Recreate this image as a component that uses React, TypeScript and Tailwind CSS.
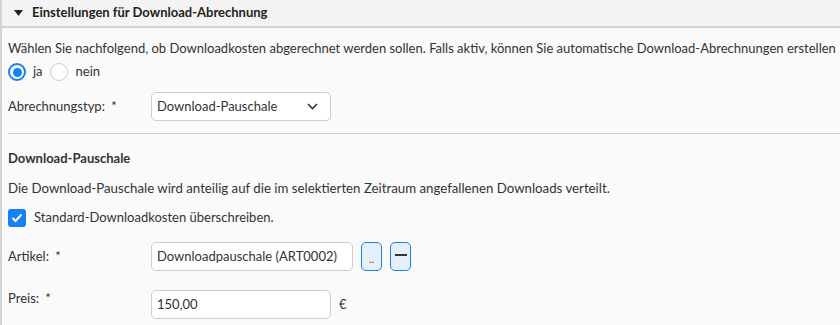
import React from "react";

export default function App() {
  const font = { fontFamily: 'Lato, "Noto Sans", sans-serif' };
  return (
    <div className="w-[840px] h-[325px] overflow-hidden bg-[#fafafa] text-[13px] text-[#333]" style={font}>
      <div className="border-l-2 border-[#d4d4d4] h-full">
        <div className="h-[28px] bg-[#f3f3f3] border-b-2 border-[#d4d4d4] flex items-center pl-[12px] gap-[9px]">
          <svg width="9" height="6" viewBox="0 0 9 6"><path d="M0 0H9L4.5 6Z" fill="#222" /></svg>
          <span className="font-bold text-[#222]">Einstellungen für Download-Abrechnung</span>
        </div>
        <div className="px-[6px]">
          <div className="mt-[10px] h-[20px] whitespace-nowrap leading-[20px]">
            Wählen Sie nachfolgend, ob Downloadkosten abgerechnet werden sollen. Falls aktiv, können Sie automatische Download-Abrechnungen erstellen
          </div>
          <div className="flex items-center h-[24px] mt-[2px]">
            <span className="w-[18px] h-[18px] rounded-full border-2 border-[#1482f5] bg-white flex items-center justify-center">
              <span className="w-[9px] h-[9px] rounded-full bg-[#1482f5]" />
            </span>
            <span className="ml-[7px]">ja</span>
            <span className="ml-[7px] w-[18px] h-[18px] rounded-full border border-[#ccc] bg-white" />
            <span className="ml-[8px]">nein</span>
          </div>
          <div className="flex items-center mt-[8px]">
            <span className="w-[143px]">Abrechnungstyp: <span className="ml-[3px]">*</span></span>
            <div className="w-[180px] h-[29px] border border-[#ccc] rounded-[5px] bg-white flex items-center justify-between pl-[5px] pr-[12px]">
              <span>Download-Pauschale</span>
              <svg width="11" height="7" viewBox="0 0 11 7"><path d="M1 1L5.5 5.5L10 1" stroke="#333" strokeWidth="1.6" fill="none" /></svg>
            </div>
          </div>
          <div className="h-px bg-[#ccc] mt-[12px] -mr-[6px]" />
          <div className="font-bold mt-[14px] h-[20px] leading-[20px]">Download-Pauschale</div>
          <div className="mt-[10px] h-[20px] leading-[20px] text-[13.25px] whitespace-nowrap">Die Download-Pauschale wird anteilig auf die im selektierten Zeitraum angefallenen Downloads verteilt.</div>
          <div className="flex items-center mt-[10px] h-[20px]">
            <span className="w-[18px] h-[18px] rounded-[3px] bg-[#1482f5] flex items-center justify-center">
              <svg width="12" height="10" viewBox="0 0 12 10"><path d="M1.5 5L4.5 8L10.5 1.5" stroke="white" strokeWidth="2" fill="none" /></svg>
            </span>
            <span className="ml-[8px]">Standard-Downloadkosten überschreiben.</span>
          </div>
          <div className="flex items-center mt-[14px]">
            <span className="w-[143px]">Artikel: <span className="ml-[3px]">*</span></span>
            <div className="w-[202px] h-[29px] border border-[#ccc] rounded-[5px] bg-white flex items-center pl-[5px]">Downloadpauschale (ART0002)</div>
            <button className="ml-[8px] w-[21px] h-[29px] border border-[#1482f5] rounded-[5px] bg-[#e6f0fc] text-[11px] leading-none pt-[4px] text-[#555]">..</button>
            <button className="ml-[8px] w-[21px] h-[29px] border border-[#1482f5] rounded-[5px] bg-[#e6f0fc] flex items-center justify-center pb-[3px]">
              <span className="w-[12px] h-[2px] bg-[#333]" />
            </button>
          </div>
          <div className="flex items-start mt-[19px]">
            <span className="w-[143px] leading-[20px] -mt-[2px]">Preis: <span className="ml-[3px]">*</span></span>
            <div className="w-[180px] h-[29px] border border-[#ccc] rounded-[5px] bg-white flex items-center pl-[5px]">150,00</div>
            <span className="ml-[8px] h-[29px] flex items-center">€</span>
          </div>
        </div>
      </div>
    </div>
  );
}
